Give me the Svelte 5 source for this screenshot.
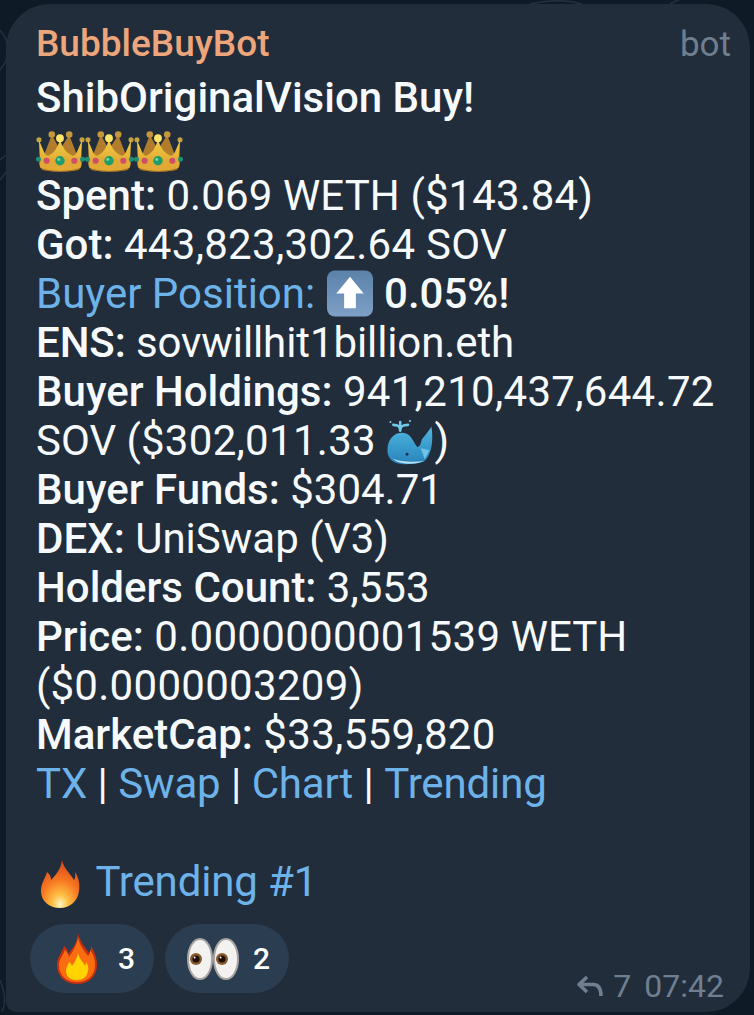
<script lang="ts">
	const stats = [
		{ label: 'Got:', value: '443,823,302.64 SOV' }
	];
</script>

{#snippet crown(id: string)}
	<svg class="emoji crown" viewBox="0 0 47 40" aria-hidden="true">
		<defs>
			<linearGradient {id} x1="0" y1="0" x2="0" y2="1">
				<stop offset="0" stop-color="#f6cf45" />
				<stop offset="1" stop-color="#d99f2f" />
			</linearGradient>
		</defs>
		<path d="M15 4 L6 27 H41 L32 4 L23 18 Z" fill="#b17c2b" />
		<circle cx="15" cy="3.5" r="3.2" fill="#c4973a" />
		<circle cx="32" cy="3.5" r="3.2" fill="#c4973a" />
		<circle cx="2.5" cy="8.5" r="2.5" fill="#c4a23e" />
		<circle cx="44.5" cy="8.5" r="2.5" fill="#c4a23e" />
		<path d="M23 8 Q26 20 35 24 Q38 25 41 17 L44.5 9 Q44 24 43 36 H4 Q3 24 2.5 9 L6 17 Q9 25 12 24 Q20 20 23 8 Z" fill={`url(#${id})`} />
		<circle cx="23" cy="7" r="3.8" fill="#ffe468" />
		<path d="M3 30 Q23 24 44 30 Q45 36 39 38 Q23 41 8 38 Q2 36 3 30 Z" fill="#e2aa35" />
		<path d="M4 36 Q23 42 43 36 Q42 38 39 38.5 Q23 41 8 38.5 Q5 38 4 36 Z" fill="#a87520" />
		<circle cx="23" cy="29" r="4.6" fill="#1f9c68" />
		<circle cx="21.8" cy="27.8" r="1.4" fill="#7fd8ae" />
		<circle cx="10" cy="29" r="3" fill="#cf4f6a" />
		<circle cx="37" cy="29" r="3" fill="#cf4f6a" />
		<circle cx="2" cy="27.5" r="2.5" fill="#1f8f73" />
		<circle cx="45" cy="27.5" r="2.5" fill="#1f8f73" />
	</svg>
{/snippet}

{#snippet arrowUp()}
	<svg class="emoji arrow" viewBox="0 0 48 48" aria-hidden="true">
		<defs>
			<linearGradient id="box" x1="0" y1="0" x2="0" y2="1">
				<stop offset="0" stop-color="#5b82a9" />
				<stop offset="1" stop-color="#7e9fc6" />
			</linearGradient>
		</defs>
		<rect x="0.5" y="0.5" width="47" height="47" rx="8" fill="url(#box)" />
		<path d="M24 7 L38 24 H30 V39 H18 V24 H10 Z" fill="#fff" />
	</svg>
{/snippet}

{#snippet whale()}
	<svg class="emoji whale" viewBox="0 0 48 48" aria-hidden="true">
		<defs>
			<linearGradient id="wh" x1="0" y1="0" x2="0" y2="1">
				<stop offset="0" stop-color="#4fb6e0" />
				<stop offset="1" stop-color="#2783bb" />
			</linearGradient>
		</defs>
		<path d="M1 33 C1 21 8 15 16 15 C25 15 27 24 31 29 C33 31 35 27 36 22 L40 17 L46 9 C48 24 46 36 40 43 C34 48 16 48 10 46 C4 44 1 39 1 33 Z" fill="url(#wh)" />
		<path d="M6 41 C14 45 28 45 39 44 C30 48 12 48 6 41 Z" fill="#b4e0f2" />
		<path d="M35 31 L44 33 L39 42 Z" fill="#6ec3e6" />
		<circle cx="21" cy="37" r="1.5" fill="#12304a" />
		<path d="M14 13 C14 8 11 7 7 7 M14 13 C14 8 17 7 22 7 M14 13 V4" fill="none" stroke="#6fcbe8" stroke-width="2.6" stroke-linecap="round" />
		<circle cx="4" cy="4" r="1" fill="#8fd4ee" />
		<circle cx="24" cy="3" r="1" fill="#8fd4ee" />
	</svg>
{/snippet}

{#snippet flame()}
	<svg class="emoji fire-small" viewBox="0 0 40 48" aria-hidden="true">
		<defs>
			<radialGradient id="f1" cx="0.5" cy="0.92" r="0.9">
				<stop offset="0" stop-color="#fff6c8" />
				<stop offset="0.22" stop-color="#ffc145" />
				<stop offset="0.55" stop-color="#f77a22" />
				<stop offset="1" stop-color="#d8431a" />
			</radialGradient>
		</defs>
		<path d="M22 0 C24 9 30 13 34 20 C36 17 35 14 35 12 C39 18 40 24 39 31 C38 41 30 48 20 48 C9 48 1 41 1 31 C1 23 5 19 7 12 C10 14 11 17 11 20 C16 15 21 9 22 0 Z" fill="url(#f1)" />
	</svg>
{/snippet}

{#snippet flamePill()}
	<svg class="emoji fire-pill" viewBox="0 0 40 51" aria-hidden="true">
		<path d="M21 0 C23 9 28 14 32 20 C34 18 34 15 34 13 C38 19 40 26 40 32 C40 44 31 51 20 51 C9 51 0 44 0 32 C0 24 5 20 7 13 C10 15 11 18 11 21 C16 15 21 9 21 0 Z" fill="#c9300f" />
		<path d="M21 4 C22 12 27 17 31 23 C33 21 33 19 33 17 C37 22 38 27 38 32 C38 43 30 49 20 49 C10 49 2 43 2 32 C2 26 6 23 8 17 C10 19 12 22 12 24 C16 18 20 12 21 4 Z" fill="#fa6c10" />
		<path d="M21 20 C22 26 26 28 28 33 C29 31 29 30 29 29 C31 32 32 35 31 38 C30 44 26 47 20 47 C14 47 9 44 9 38 C9 34 11 32 12 29 C14 30 14 32 15 33 C18 29 20 25 21 20 Z" fill="#ffd400" />
	</svg>
{/snippet}

{#snippet eyes()}
	<svg class="emoji eyes" viewBox="0 0 52 42" aria-hidden="true">
		<ellipse cx="13" cy="21" rx="12" ry="20" fill="#f4f2f1" stroke="#a9a5a3" stroke-width="2" />
		<ellipse cx="39" cy="21" rx="12" ry="20" fill="#f4f2f1" stroke="#a9a5a3" stroke-width="2" />
		<circle cx="9" cy="21" r="6" fill="#8a5a2f" />
		<circle cx="35" cy="21" r="6" fill="#8a5a2f" />
		<circle cx="9" cy="21" r="3.6" fill="#1c0d06" />
		<circle cx="35" cy="21" r="3.6" fill="#1c0d06" />
		<circle cx="7.6" cy="19.4" r="1" fill="#fff" />
		<circle cx="33.6" cy="19.4" r="1" fill="#fff" />
	</svg>
{/snippet}

<main class="page">
	<svg class="doodles" viewBox="0 0 754 1015" aria-hidden="true">
		<circle cx="-20" cy="50" r="28" />
		<path d="M0 160 L6 155 M0 180 L6 172" />
		<path d="M530 4 Q570 -4 590 8 M670 4 L682 -2" />
		<path d="M0 980 Q8 1000 2 1012" />
	</svg>
	<article class="bubble">
		<header class="head">
			<span class="name">BubbleBuyBot</span>
			<span class="tag">bot</span>
		</header>
		<div class="body">
			<div class="line"><b>ShibOriginalVision Buy!</b></div>
			<div class="line">{@render crown('c1')}{@render crown('c2')}{@render crown('c3')}</div>
			<div class="line"><b>Spent:</b> <span class="num-fine">0.069 WETH ($143.84)</span></div>
			{#each stats as s}
				<div class="line"><b>{s.label}</b> <span class="num">{s.value}</span></div>
			{/each}
			<div class="line"><span class="position">Buyer Position:</span> {@render arrowUp()} <b>0.05%!</b></div>
			<div class="line tight"><b>ENS:</b> sovwillhit1billion.eth</div>
			<div class="line"><b>Buyer Holdings:</b> <span class="num">941,210,437,644.72</span> SOV (<span class="num">$302,011.33</span> {@render whale()})</div>
			<div class="line"><b>Buyer Funds:</b> $304.71</div>
			<div class="line"><b>DEX:</b> UniSwap (V3)</div>
			<div class="line"><b>Holders Count:</b> 3,553</div>
			<div class="line"><b>Price:</b> <span class="num">0.0000000001539</span> WETH (<span class="num">$0.0000003209</span>)</div>
			<div class="line"><b>MarketCap:</b> <span class="num">$33,559,820</span></div>
			<div class="line"><span class="link">TX</span> | <span class="link">Swap</span> | <span class="link">Chart</span> | <span class="link">Trending</span></div>
			<div class="line"></div>
			<div class="line">{@render flame()} <span class="link">Trending #1</span></div>
		</div>
		<footer class="foot">
			<div class="reactions">
				<div class="pill">{@render flamePill()}<span>3</span></div>
				<div class="pill">{@render eyes()}<span>2</span></div>
			</div>
			<div class="meta">
				<svg class="reply" viewBox="0 0 27 22" aria-hidden="true">
					<path d="M11 2 L3 9.5 L11 17 M3 9.5 H17 C22 9.5 25 13 25 21" fill="none" stroke="currentColor" stroke-width="3.6" stroke-linejoin="round" />
				</svg>
				<span>7</span>
				<span class="time">07:42</span>
			</div>
		</footer>
	</article>
</main>

<style>
	:global(body) {
		margin: 0;
		background: #0f1a27;
	}

	.page {
		position: relative;
		box-sizing: border-box;
		width: 754px;
		height: 1015px;
		padding: 4px 4px 3px 6px;
		overflow: hidden;
		background: #0f1a27;
		font-family: Roboto, 'Liberation Sans', sans-serif;
	}

	.doodles {
		position: absolute;
		inset: 0;
		width: 754px;
		height: 1015px;
		fill: none;
		stroke: #24313f;
		stroke-width: 1.5;
	}

	.bubble {
		position: relative;
		box-sizing: border-box;
		height: 1008px;
		padding: 18px 26px 0 30px;
		border-radius: 44px 44px 44px 10px;
		background: #212d3b;
		color: #f7fafc;
	}

	.head {
		display: flex;
		justify-content: space-between;
		align-items: baseline;
		height: 51px;
	}

	.name {
		font-size: 37px;
		font-weight: 500;
		color: #eda67c;
	}

	.tag {
		margin-right: -7px;
		font-size: 35px;
		color: #6f7f8f;
	}

	.body {
		font-size: 42px;
		line-height: 49px;
	}

	.line {
		min-height: 49px;
	}

	.tight {
		letter-spacing: -0.1px;
	}

	.num {
		letter-spacing: 0.3px;
	}

	.num-fine {
		letter-spacing: 0.1px;
	}

	b {
		font-weight: 500;
	}

	.position {
		color: #6db3ea;
	}

	.link {
		color: #6db3ea;
		letter-spacing: -0.15px;
	}

	.emoji {
		display: inline-block;
		margin-block: -12px;
	}

	.crown {
		width: 49px;
		height: 41px;
		vertical-align: 1px;
	}

	.arrow {
		width: 48px;
		height: 47px;
		vertical-align: 3px;
	}

	.whale {
		width: 48px;
		height: 47px;
		vertical-align: 2px;
	}

	.fire-small {
		width: 40px;
		height: 48px;
		margin-inline: 4px 5px;
		vertical-align: 0;
	}

	.foot {
		display: flex;
		justify-content: space-between;
		align-items: flex-end;
		margin: 18px 0 0 -6px;
	}

	.reactions {
		display: flex;
		gap: 11px;
	}

	.pill {
		display: flex;
		align-items: center;
		width: 124px;
		height: 69px;
		border-radius: 35px;
		background: #2b3d50;
		color: #fff;
		font-size: 30px;
		font-weight: 500;
	}

	.fire-pill {
		width: 40px;
		height: 51px;
		margin: 0 21px 0 27px;
	}

	.eyes {
		width: 52px;
		height: 42px;
		margin: 0 14px 0 22px;
	}

	.meta {
		display: flex;
		align-items: center;
		gap: 10px;
		margin-bottom: -12px;
		font-size: 32px;
		color: #6f7f8f;
	}

	.reply {
		width: 27px;
		height: 22px;
	}

	.time {
		margin-left: 3px;
	}
</style>
